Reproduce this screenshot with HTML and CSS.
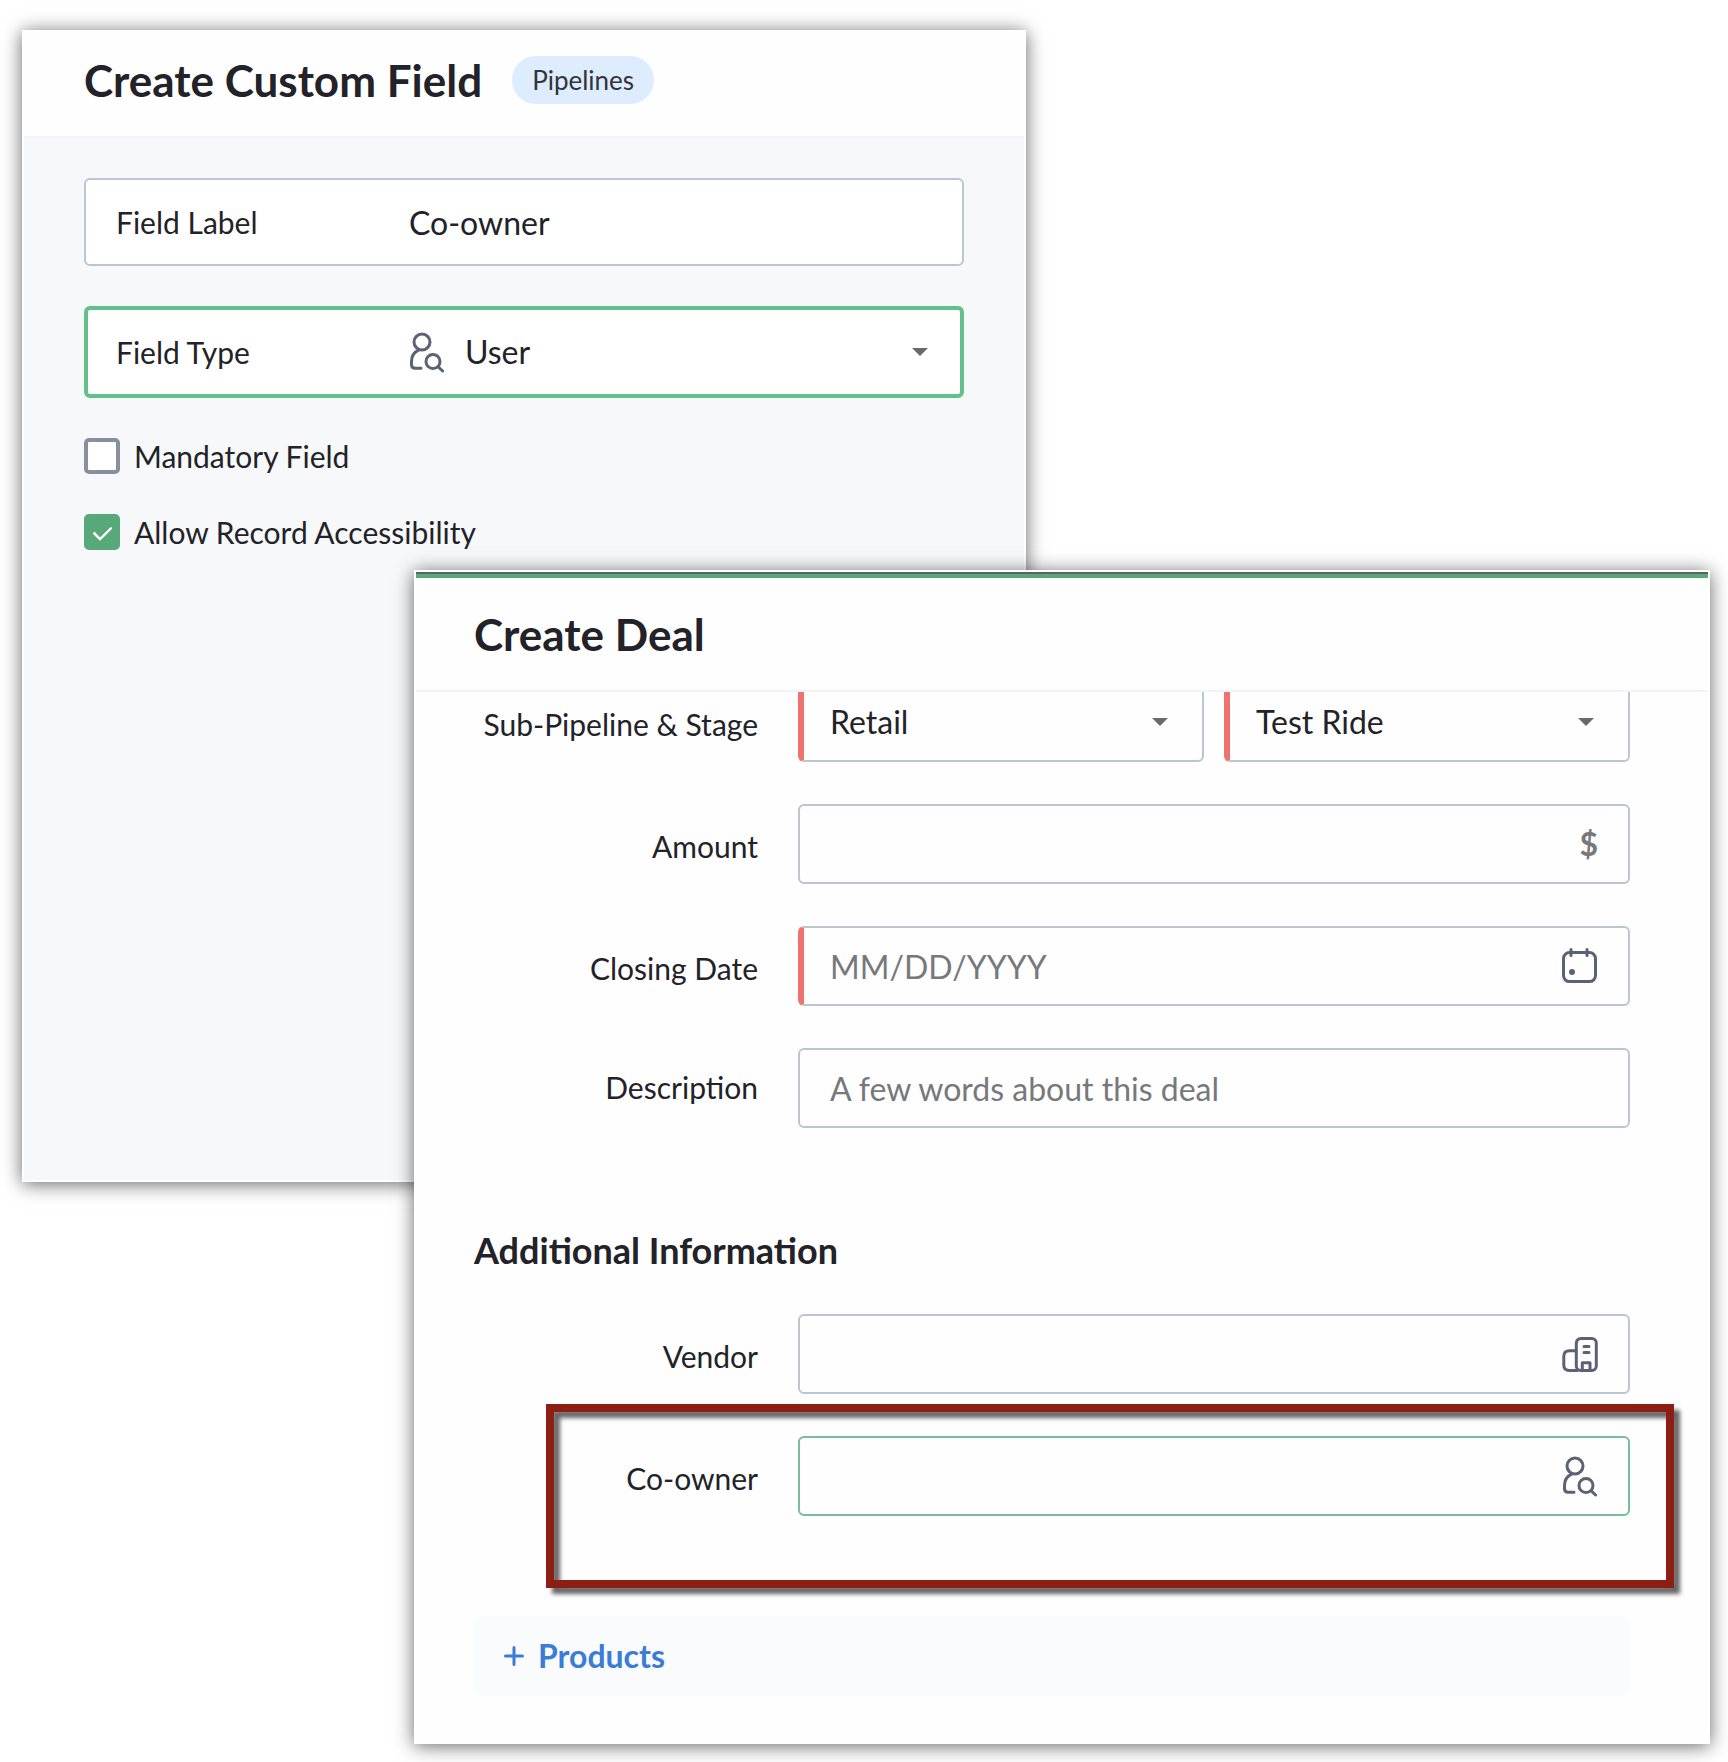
FILE: index.html
```html
<!DOCTYPE html>
<html lang="en">
<head>
  <meta charset="utf-8">
  <meta name="viewport" content="width=device-width, initial-scale=1">
  <title>Create Custom Field</title>
  <link rel="stylesheet" href="styles.css">
</head>
<body>
  <svg class="sprite" aria-hidden="true">
    <symbol id="icon-user-search" viewBox="0 0 36 42">
      <circle cx="13" cy="11" r="8"/>
      <path d="M9.700 19.100C5 21.100 2.500 25.700 2.500 30.500V33.700Q2.500 37.300 6.300 37.300H12"/>
      <circle cx="24" cy="30.500" r="7"/>
      <path d="M29 35.700L33.600 40"/>
    </symbol>
    <symbol id="icon-calendar" viewBox="0 0 36 36">
      <rect x="0.600" y="4.600" width="32" height="29" rx="6" transform="translate(0.900 0)"/>
      <path d="M9 1.500V7.600M25 1.500V7.600"/>
      <circle class="solid" cx="10" cy="24" r="3"/>
    </symbol>
    <symbol id="icon-building" viewBox="0 0 36 38">
      <rect x="14.300" y="3.500" width="20" height="32" rx="4.500"/>
      <path d="M14 15.800H7.500Q1.800 15.800 1.800 21.500V30Q1.800 35.500 7.500 35.500H15M22 11.500H27M22 17.500H27M20.300 35.500V27.800H28V35.500"/>
    </symbol>
  </svg>

  <main class="stage">
    <section class="panel panel-field">
      <header class="panel-header">
        <h1 class="panel-title">Create Custom Field</h1>
        <span class="pill">Pipelines</span>
      </header>
      <form class="field-form">
        <div class="inline-field">
          <label class="inline-label" for="field-label">Field Label</label>
          <input class="control" id="field-label" type="text" value="Co-owner">
        </div>
        <div class="inline-field is-active">
          <label class="inline-label" for="field-type">Field Type</label>
          <svg class="icon icon-user type-icon"><use href="#icon-user-search"/></svg>
          <select class="control" id="field-type"><option>User</option></select>
          <span class="caret"></span>
        </div>
        <label class="check"><input type="checkbox"> Mandatory Field</label>
        <label class="check"><input type="checkbox" checked> Allow Record Accessibility</label>
      </form>
    </section>

    <section class="panel panel-deal">
      <header class="panel-header">
        <h2 class="panel-title">Create Deal</h2>
      </header>
      <div class="scroll">
        <form class="deal-form">
          <div class="row">
            <label class="row-label" for="sub-pipeline">Sub-Pipeline &amp; Stage</label>
            <div class="pair">
              <div class="box required">
                <select class="control" id="sub-pipeline"><option>Retail</option></select>
                <span class="caret"></span>
              </div>
              <div class="box required">
                <select class="control" aria-label="Stage"><option>Test Ride</option></select>
                <span class="caret"></span>
              </div>
            </div>
          </div>
          <div class="row">
            <label class="row-label" for="amount">Amount</label>
            <div class="box">
              <input class="control" id="amount" type="text">
              <span class="currency">$</span>
            </div>
          </div>
          <div class="row">
            <label class="row-label" for="closing">Closing Date</label>
            <div class="box required">
              <input class="control" id="closing" type="text" placeholder="MM/DD/YYYY">
              <svg class="icon"><use href="#icon-calendar"/></svg>
            </div>
          </div>
          <div class="row row-multiline">
            <label class="row-label" for="description">Description</label>
            <div class="box">
              <input class="control" id="description" type="text" placeholder="A few words about this deal">
            </div>
          </div>

          <h3 class="section-title">Additional Information</h3>

          <div class="row">
            <label class="row-label" for="vendor">Vendor</label>
            <div class="box">
              <input class="control" id="vendor" type="text">
              <svg class="icon icon-building"><use href="#icon-building"/></svg>
            </div>
          </div>
          <div class="row highlighted">
            <label class="row-label" for="co-owner">Co-owner</label>
            <div class="box is-focused">
              <input class="control" id="co-owner" type="text">
              <svg class="icon icon-user"><use href="#icon-user-search"/></svg>
            </div>
          </div>

          <button class="products" type="button">
            <svg class="plus" viewBox="0 0 20 20" aria-hidden="true"><path d="M10 1.500V18.500M1.500 10H18.500"/></svg>
            Products
          </button>
        </form>
      </div>
    </section>
  </main>
</body>
</html>
```
FILE: styles.css
```css
:root {
  --text: #222228;
  --muted: #77787c;
  --line: #bcc5d2;
  --icon: #5b6275;
  --green: #57a979;
}

* {
  box-sizing: border-box;
}

body {
  margin: 0;
  background: #fff;
  color: var(--text);
  font-family: Lato, Carlito, sans-serif;
  font-size: 30px;
  line-height: 36px;
}

.sprite {
  display: none;
}

/* Two overlapping windows share the grid's only row. */
.stage {
  display: grid;
  grid-template-columns: 392fr 612fr 684fr;
  padding: 30px 18px 18px 22px;
}

.panel {
  grid-row: 1;
  min-width: 0;
  border: 2px solid #fff;
  box-shadow: 0 2px 18px rgba(0, 0, 0, 0.6);
}

.panel-field {
  grid-column: 1 / 3;
  align-self: start;
  min-height: 1152px;
  background: #f7f8fa;
}

.panel-deal {
  grid-column: 2 / 4;
  margin-top: 540px;
  background: #fefefe;
}

.panel-header {
  display: flex;
  align-items: center;
  gap: 30px;
  background: #fdfefd;
  border-bottom: 2px solid #f0f3f8;
}

.panel-field .panel-header {
  height: 106px;
  padding: 0 60px 8px;
}

.panel-deal .panel-header {
  height: 120px;
  padding: 4px 58px 0;
  border-top: 2px solid #5f6068;
  box-shadow: inset 0 4px var(--green);
}

.panel-title {
  margin: 0;
  font-size: 44px;
  line-height: 52px;
  font-weight: 700;
}

.pill {
  padding: 6px 20px;
  border-radius: 24px;
  background: #deedfd;
  color: #33343c;
  font-size: 26px;
}

.control {
  flex: 1;
  min-width: 0;
  height: 100%;
  margin: 0;
  padding: 0;
  border: 0;
  outline: 0;
  appearance: none;
  background: transparent;
  color: var(--text);
  font: inherit;
  font-size: 32px;
}

.control::placeholder {
  color: var(--muted);
  opacity: 1;
}

.caret {
  margin-right: 4px;
  border: 8px solid transparent;
  border-top-color: #6a6a6a;
  border-bottom: 0;
  pointer-events: none;
}

.icon {
  flex: none;
  width: 36px;
  height: 36px;
  fill: none;
  stroke: var(--icon);
  stroke-width: 3;
  stroke-linecap: round;
  stroke-linejoin: round;
}

.icon-user {
  height: 42px;
}

.icon-building {
  height: 38px;
}

.solid {
  fill: var(--icon);
  stroke: none;
}

/* Custom field window */
.field-form {
  display: flex;
  flex-direction: column;
  gap: 40px;
  padding: 40px 60px;
}

.inline-field {
  display: flex;
  align-items: center;
  height: 88px;
  padding: 0 30px;
  border: 2px solid var(--line);
  border-radius: 6px;
  background: #fff;
}

.inline-field.is-active {
  height: 92px;
  padding: 0 28px;
  border: 4px solid #63c08a;
}

.inline-label {
  flex: none;
  width: 293px;
}

.type-icon {
  margin-right: 20px;
}

.check {
  display: flex;
  align-items: center;
  gap: 14px;
}

.check input {
  display: grid;
  place-content: center;
  width: 36px;
  height: 36px;
  margin: 0;
  appearance: none;
  border: 4px solid #87909e;
  border-radius: 5px;
  background: #fff;
}

.check input:checked {
  border-color: var(--green);
  background: var(--green);
}

.check input:checked::after {
  content: "";
  width: 8px;
  height: 15px;
  margin-bottom: 2px;
  border: solid #fff;
  border-width: 0 3px 3px 0;
  border-radius: 1px;
  transform: rotate(45deg);
}

/* Deal window; the form is scrolled slightly under its header. */
.scroll {
  overflow: hidden;
}

.deal-form {
  display: flex;
  flex-direction: column;
  gap: 42px;
  margin-top: -10px;
  padding: 0 78px 46px 58px;
}

.row {
  display: grid;
  grid-template-columns: 284px minmax(0, 1fr);
  column-gap: 40px;
  align-items: center;
}

.row-label {
  padding-top: 4px;
  text-align: right;
}

.row-multiline .row-label {
  padding: 0 0 2px;
}

.pair {
  display: grid;
  grid-template-columns: 1fr 1fr;
  gap: 20px;
}

.box {
  display: flex;
  align-items: center;
  min-width: 0;
  height: 80px;
  padding: 0 30px;
  border: 2px solid var(--line);
  border-radius: 6px;
  overflow: hidden;
}

.box.required {
  border-left: 6px solid #ee736f;
  padding-left: 26px;
}

.box.is-focused {
  border-color: #79bd99;
}

.currency {
  color: var(--muted);
  font-size: 32px;
  font-weight: 700;
}

.section-title {
  margin: 58px 0 0;
  font-size: 36px;
  line-height: 44px;
  font-weight: 700;
}

.highlighted {
  position: relative;
}

/* Callout frame drawn over the row */
.highlighted::after {
  content: "";
  position: absolute;
  inset: -32px -44px -72px 72px;
  border: 8px solid #8c1e14;
  filter: drop-shadow(6px 6px 2px rgba(0, 0, 0, 0.6));
  pointer-events: none;
}

.products {
  display: flex;
  align-items: center;
  gap: 14px;
  height: 80px;
  margin-top: 58px;
  padding: 0 30px;
  border: 0;
  border-radius: 8px;
  background: #f9fbfd;
  color: #3b7dd4;
  font: inherit;
  font-size: 32px;
  font-weight: 700;
}

.plus {
  width: 20px;
  height: 20px;
  fill: none;
  stroke: currentColor;
  stroke-width: 3;
  stroke-linecap: round;
}
```
